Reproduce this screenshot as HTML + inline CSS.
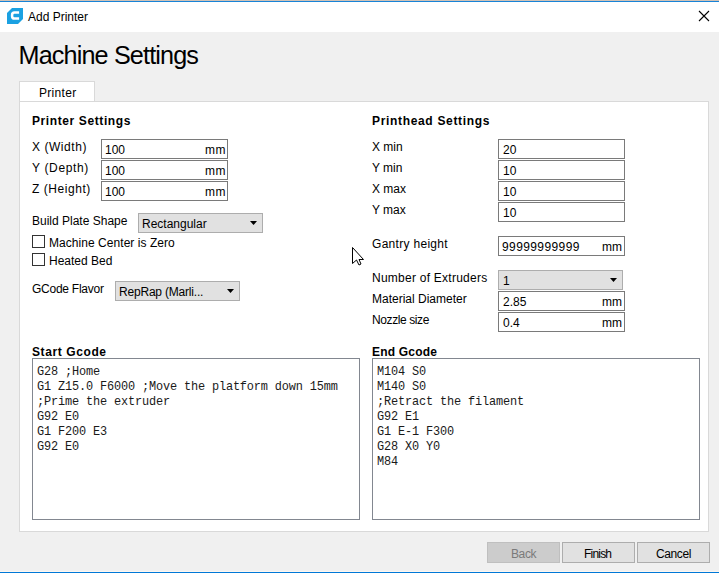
<!DOCTYPE html>
<html><head><meta charset="utf-8">
<style>
*{box-sizing:border-box;margin:0;padding:0}
html,body{width:719px;height:573px;overflow:hidden;background:#f0f0f0;font-family:"Liberation Sans",sans-serif;font-size:12px;color:#000}
.a{position:absolute}
.t{position:absolute;white-space:nowrap;line-height:14px;font-size:12px}
.b{font-weight:bold}
.fld{position:absolute;background:#fff;border:1px solid #7a7a7a;width:127px;height:20px}
.cmb{position:absolute;background:#e1e1e1;border:1px solid #adadad;height:20px}
.arr{position:absolute;width:7px;height:4px;background:#000;clip-path:polygon(0 0,100% 0,50% 100%)}
.chk{position:absolute;width:13px;height:13px;border:1px solid #333;background:#fff}
.ta{position:absolute;background:#fff;border:1px solid #828790;width:328px;height:162px}
.mono{position:absolute;font-family:"Liberation Mono",monospace;font-size:11.9px;letter-spacing:-0.14px;line-height:15px;white-space:pre;color:#1a1a1a}
.btn{position:absolute;top:542px;width:73px;height:21px;background:#e1e1e1;border:1px solid #adadad}
</style></head>
<body>
<!-- title bar -->
<div class="a" style="left:0;top:0;width:719px;height:32px;background:#fff"></div>
<div class="a" style="left:0;top:0;width:719px;height:1px;background:#d0c2b6"></div>
<div class="a" style="left:0;top:1px;width:719px;height:1px;background:#1883d7"></div>
<svg class="a" style="left:7px;top:8px" width="16" height="16" viewBox="0 0 16 16">
<polygon points="5,0 16,0 16,11 11,16 0,16 0,5" fill="#1ba1e2"/>
<path d="M12.1,4.5 H7.5 Q5.1,4.5 5.1,6.9 V8.2 Q5.1,10.6 7.5,10.6 H12.1" fill="none" stroke="#fff" stroke-width="2.5"/>
</svg>
<div class="t" style="left:28px;top:10px">Add Printer</div>
<svg class="a" style="left:698px;top:10px" width="12" height="12" viewBox="0 0 12 12">
<path d="M1,1 L11,11 M11,1 L1,11" stroke="#000" stroke-width="1.1"/>
</svg>

<!-- heading -->
<div class="t" style="left:18.5px;top:41px;font-size:25.2px;line-height:28px;letter-spacing:-0.85px">Machine Settings</div>

<!-- tab + panel -->
<div class="a" style="left:19px;top:101px;width:690px;height:431px;background:#fff;border:1px solid #d9d9d9"></div>
<div class="a" style="left:19px;top:81px;width:76px;height:21px;background:#fff;border:1px solid #d9d9d9;border-bottom:none"></div>
<div class="a" style="left:20px;top:101px;width:74px;height:1px;background:#d9d9d9"></div>
<div class="t" style="left:39px;top:86px;letter-spacing:0.3px">Printer</div>

<!-- left column -->
<div class="t b" style="left:32px;top:114px;letter-spacing:0.6px">Printer Settings</div>
<div class="t" style="left:32px;top:140px;letter-spacing:0.55px">X (Width)</div>
<div class="t" style="left:32px;top:161px;letter-spacing:0.65px">Y (Depth)</div>
<div class="t" style="left:32px;top:182px;letter-spacing:0.55px">Z (Height)</div>

<div class="fld" style="left:101px;top:139px"></div>
<div class="t" style="left:105px;top:143px">100</div>
<div class="t" style="left:205px;letter-spacing:0.5px;top:143px">mm</div>
<div class="fld" style="left:101px;top:160px"></div>
<div class="t" style="left:105px;top:164px">100</div>
<div class="t" style="left:205px;letter-spacing:0.5px;top:164px">mm</div>
<div class="fld" style="left:101px;top:181px"></div>
<div class="t" style="left:105px;top:185px">100</div>
<div class="t" style="left:205px;letter-spacing:0.5px;top:185px">mm</div>

<div class="t" style="left:32px;top:214px">Build Plate Shape</div>
<div class="cmb" style="left:138px;top:213px;width:125px"></div>
<div class="t" style="left:142px;top:217px">Rectangular</div>
<div class="arr" style="left:250px;top:221px"></div>

<div class="chk" style="left:32px;top:235px"></div>
<div class="t" style="left:49px;top:236px;letter-spacing:0.05px">Machine Center is Zero</div>
<div class="chk" style="left:32px;top:253px"></div>
<div class="t" style="left:49px;top:254px">Heated Bed</div>

<div class="t" style="left:32px;top:282px;letter-spacing:-0.25px">GCode Flavor</div>
<div class="cmb" style="left:115px;top:281px;width:125px"></div>
<div class="t" style="left:119px;top:285px;letter-spacing:-0.2px">RepRap (Marli...</div>
<div class="arr" style="left:227px;top:289px"></div>

<!-- right column -->
<div class="t b" style="left:372px;top:114px;letter-spacing:0.67px">Printhead Settings</div>
<div class="t" style="left:372px;top:140px">X min</div>
<div class="t" style="left:372px;top:161px">Y min</div>
<div class="t" style="left:372px;top:182px">X max</div>
<div class="t" style="left:372px;top:203px">Y max</div>
<div class="fld" style="left:498px;top:139px"></div>
<div class="t" style="left:503px;top:143px">20</div>
<div class="fld" style="left:498px;top:160px"></div>
<div class="t" style="left:503px;top:164px">10</div>
<div class="fld" style="left:498px;top:181px"></div>
<div class="t" style="left:503px;top:185px">10</div>
<div class="fld" style="left:498px;top:202px"></div>
<div class="t" style="left:503px;top:206px">10</div>

<div class="t" style="left:372px;top:237px;letter-spacing:0.3px">Gantry height</div>
<div class="fld" style="left:498px;top:236px"></div>
<div class="t" style="left:502px;top:240px;letter-spacing:0.4px">99999999999</div>
<div class="t" style="left:602px;top:240px">mm</div>

<div class="t" style="left:372px;top:271px;letter-spacing:0.25px">Number of Extruders</div>
<div class="cmb" style="left:498px;top:270px;width:125px"></div>
<div class="t" style="left:503px;top:274px">1</div>
<div class="arr" style="left:610px;top:278px"></div>

<div class="t" style="left:372px;top:292px">Material Diameter</div>
<div class="fld" style="left:498px;top:291px"></div>
<div class="t" style="left:503px;top:295px">2.85</div>
<div class="t" style="left:602px;top:295px">mm</div>

<div class="t" style="left:372px;top:313px;letter-spacing:-0.4px">Nozzle size</div>
<div class="fld" style="left:498px;top:312px"></div>
<div class="t" style="left:503px;top:316px">0.4</div>
<div class="t" style="left:602px;top:316px">mm</div>

<!-- gcode -->
<div class="t b" style="left:32px;top:345px;letter-spacing:0.6px">Start Gcode</div>
<div class="ta" style="left:32px;top:358px"></div>
<div class="mono" style="left:37px;top:365px">G28 ;Home
G1 Z15.0 F6000 ;Move the platform down 15mm
;Prime the extruder
G92 E0
G1 F200 E3
G92 E0</div>

<div class="t b" style="left:372px;top:345px;letter-spacing:0.2px">End Gcode</div>
<div class="ta" style="left:372px;top:358px"></div>
<div class="mono" style="left:377px;top:365px">M104 S0
M140 S0
;Retract the filament
G92 E1
G1 E-1 F300
G28 X0 Y0
M84</div>

<!-- cursor -->
<svg class="a" style="left:351px;top:246px" width="14" height="21" viewBox="0 0 14 21">
<polygon points="1.5,1.5 1.5,17.5 5.5,14 8,19 10,18 8,13.5 12.5,13.5" fill="#fff" stroke="#000" stroke-width="1" stroke-linejoin="miter"/>
</svg>

<!-- buttons -->
<div class="btn" style="left:487px;background:#cccccc;border-color:#bfbfbf"></div>
<div class="t" style="left:511px;top:547px;color:#7a7a7a;letter-spacing:-0.4px">Back</div>
<div class="btn" style="left:562px"></div>
<div class="t" style="left:584px;top:547px;letter-spacing:-0.8px">Finish</div>
<div class="btn" style="left:637px"></div>
<div class="t" style="left:656px;top:547px;letter-spacing:-0.4px">Cancel</div>

<!-- bottom border -->
<div class="a" style="left:0;top:571px;width:719px;height:1px;background:#fcf6f0"></div>
<div class="a" style="left:0;top:572px;width:719px;height:1px;background:#0078d7"></div>
</body></html>
